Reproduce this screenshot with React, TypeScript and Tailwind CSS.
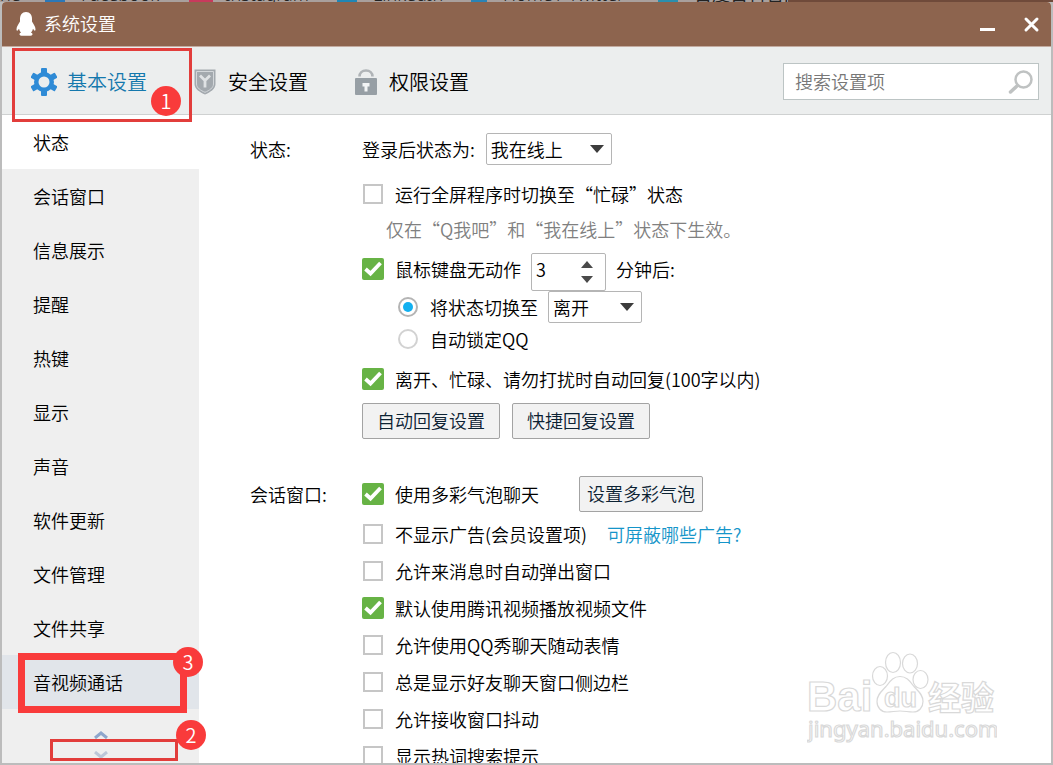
import React, { useState } from 'react';

const sidebarItems = [
  '状态',
  '会话窗口',
  '信息展示',
  '提醒',
  '热键',
  '显示',
  '声音',
  '软件更新',
  '文件管理',
  '文件共享',
  '音视频通话',
];

const chatOptions = [
  { label: '允许来消息时自动弹出窗口', checked: false },
  { label: '默认使用腾讯视频播放视频文件', checked: true },
  { label: '允许使用QQ秀聊天随动表情', checked: false },
  { label: '总是显示好友聊天窗口侧边栏', checked: false },
  { label: '允许接收窗口抖动', checked: false },
  { label: '显示热词搜索提示', checked: false },
];

const PenguinIcon = () => (
  <svg className="w-5 h-6" viewBox="0 0 20 24" fill="#fff">
    <path d="M10 0C6 0 4 3 4 7v2.500C2.500 12 .5 14.800.5 17.200c0 1.500.7 1.900 1.400 1.100l1.100-1.600c.4 1.600 1 2.900 2 3.900-1 .5-1.500 1.200-1.500 1.700 0 1 1.400 1.500 3.300 1.500h6.400c1.900 0 3.300-.5 3.300-1.500 0-.5-.5-1.200-1.500-1.700 1-1 1.600-2.300 2-3.900l1.100 1.600c.7.8 1.400.4 1.400-1.100 0-2.400-2-5.200-3.500-7.700V7C16 3 14 0 10 0z" />
  </svg>
);

const GearIcon = () => (
  <svg className="w-[26px] h-7" viewBox="0 0 26 28">
    <g fill="#2f8bd6">
      <rect x="10" y="0" width="6" height="28" rx="1" />
      <rect x="10" y="0" width="6" height="28" rx="1" transform="rotate(60 13 14)" />
      <rect x="10" y="0" width="6" height="28" rx="1" transform="rotate(120 13 14)" />
      <circle cx="13" cy="14" r="10" />
    </g>
    <circle cx="13" cy="14" r="5.500" fill="#eceeee" />
  </svg>
);

const ShieldIcon = () => (
  <svg className="w-[22px] h-[26px]" viewBox="0 0 22 26">
    <path d="M.5.500h21V15c0 5-5.500 8.500-10.500 10.500C6 23.500.5 20 .5 15z" fill="#a3a9ae" />
    <path d="M2.500 2.500h17V15c0 3.800-4.300 6.600-8.500 8.300C6.800 21.600 2.500 18.800 2.500 15z" fill="none" stroke="#d3d7da" strokeWidth="1" />
    <path d="M6 6.500l5 5 5-5M11 11v7.500" fill="none" stroke="#dfe2e4" strokeWidth="2.800" />
  </svg>
);

const LockIcon = () => (
  <svg className="w-[22px] h-[26px]" viewBox="0 0 22 26">
    <path d="M4.500 7.500C4.500 3.800 7.200 1.500 11 1.500s6.500 2.300 6.500 6" fill="none" stroke="#b0b4b7" strokeWidth="2.600" />
    <rect x="0" y="9" width="22" height="17" rx="1" fill="#979fa5" />
    <path d="M7.500 14h7v3.500h-2v5h-3v-5h-2z" fill="#f2f4f5" />
  </svg>
);

const SearchIcon = () => (
  <svg className="w-[26px] h-6" viewBox="0 0 26 24" fill="none" stroke="#bfc2c2">
    <circle cx="15.500" cy="9.500" r="8" strokeWidth="2.500" />
    <path d="M9.500 15.500L2.500 22" strokeWidth="3.500" strokeLinecap="round" />
  </svg>
);

const tabs = [
  { label: '基本设置', icon: <GearIcon />, color: 'text-[#1478ad]' },
  { label: '安全设置', icon: <ShieldIcon />, color: 'text-black' },
  { label: '权限设置', icon: <LockIcon />, color: 'text-black' },
];

interface BadgeProps {
  children: React.ReactNode;
  className: string;
}

const Badge: React.FC<BadgeProps> = ({ children, className }) => (
  <span
    className={`absolute z-10 flex size-[30px] items-center justify-center rounded-full bg-[#f93b3b] text-xl leading-none text-white ${className}`}
  >
    {children}
  </span>
);

interface CheckProps {
  label: string;
  defaultChecked?: boolean;
}

const Check: React.FC<CheckProps> = ({ label, defaultChecked = false }) => (
  <label className="flex items-center gap-[11px]">
    <span className="relative grid size-[22px] place-items-center">
      <input
        type="checkbox"
        defaultChecked={defaultChecked}
        className="peer size-5 appearance-none border-2 border-[#c6c6c6] bg-white checked:size-[22px] checked:rounded-xs checked:border-0 checked:bg-[#67b345]"
      />
      <svg className="pointer-events-none absolute inset-0 hidden peer-checked:block" viewBox="0 0 22 22">
        <path d="M3.500 11l5 4.500 10-10.500" fill="none" stroke="#fff" strokeWidth="3.800" />
      </svg>
    </span>
    {label}
  </label>
);

interface RadioProps {
  label: string;
  defaultChecked?: boolean;
}

const Radio: React.FC<RadioProps> = ({ label, defaultChecked = false }) => (
  <label className="flex items-center gap-3">
    <span className="relative grid size-5 place-items-center">
      <input
        type="radio"
        name="idle-action"
        defaultChecked={defaultChecked}
        className="peer size-5 appearance-none rounded-full border-2 border-[#d2d2d2] bg-white checked:border-[#b4b4b4]"
      />
      <span className="pointer-events-none absolute hidden size-2.5 rounded-full bg-[#12b0f0] peer-checked:block" />
    </span>
    {label}
  </label>
);

interface DropdownProps {
  id: string;
  options: string[];
  width: string;
  label?: string;
}

const Dropdown: React.FC<DropdownProps> = ({ id, options, width, label }) => (
  <span className={`relative block ${width}`}>
    <select
      id={id}
      aria-label={label}
      className="block h-8 w-full appearance-none rounded-xs border border-[#b5b5b5] bg-white pl-1"
    >
      {options.map((option) => (
        <option key={option}>{option}</option>
      ))}
    </select>
    <svg className="pointer-events-none absolute top-3 right-2 h-2 w-3.5" viewBox="0 0 14 8">
      <path d="M0 0h14L7 8z" fill="#3c3c3c" />
    </svg>
  </span>
);

interface PushButtonProps {
  children: React.ReactNode;
  width: string;
}

const PushButton: React.FC<PushButtonProps> = ({ children, width }) => (
  <button
    type="button"
    className={`flex h-9 items-center justify-center rounded-xs border border-[#a3a3a3] bg-[#f2f2f2] pb-0.5 text-[#0c2233] ${width}`}
  >
    {children}
  </button>
);

// Lower edge of the browser bookmarks that shows above the window
const BookmarkStrip = () => (
  <div className="flex h-0.5 shrink-0 items-end overflow-hidden bg-[#a9a09d] font-['Noto_Sans'] text-lg leading-4 whitespace-nowrap text-[#222]">
    <span className="w-[45px]">ne</span>
    <span className="mr-4 h-1 w-5 shrink-0 bg-[#2b78b8]" />
    <span className="w-[108px]">Facebook</span>
    <span className="mr-3 h-1 w-6 shrink-0 bg-[#c83a5c]" />
    <span className="w-[112px]">Instagram</span>
    <span className="mr-4 h-1 w-5 shrink-0 bg-[#1f86b5]" />
    <span className="w-[98px]">LinkedIn</span>
    <span className="mr-4 h-1 w-4 shrink-0 bg-[#2a83b5]" />
    <span className="w-[155px]">Home / Twitter</span>
    <span className="mr-4 h-1 w-5 shrink-0 bg-[#2a8fae]" />
    <span className="w-[94px] shrink-0 overflow-hidden">百度百科官网</span>
    <span className="h-1 flex-1 bg-[#6f4a3a]" />
  </div>
);

const Watermark = () => (
  <svg
    className="pointer-events-none absolute right-[54px] bottom-4 h-24 w-[190px]"
    viewBox="0 0 190 96"
    fill="#fff"
    stroke="#d9d9d9"
    strokeWidth="1.200"
  >
    <text x="0" y="60" fontSize="42" fontWeight="700" fontFamily="Liberation Sans, sans-serif">
      Bai
    </text>
    <ellipse cx="73" cy="25" rx="7.500" ry="9.500" />
    <ellipse cx="86" cy="11.500" rx="7.500" ry="10" />
    <ellipse cx="103" cy="12.500" rx="7.500" ry="9.500" />
    <ellipse cx="113.500" cy="28.500" rx="7.500" ry="9" />
    <path d="M93 25.500c-7 0-10 5-14 10-4 4.500-9 8-9 15 0 6 4 10.500 10 10.500 5 0 8-1 13-1s8 1 13 1c6 0 10-4.500 10-10.500 0-7-5-10.500-9-15-4-5-7-10-14-10z" />
    <text x="77" y="56" fontSize="27" fontWeight="700" fontFamily="Liberation Sans, sans-serif">
      du
    </text>
    <text x="121" y="59" fontSize="33" fontWeight="700" fontFamily="Noto Sans CJK SC, sans-serif">
      经验
    </text>
    <text x="1" y="86" fontSize="22" fontWeight="400" fontFamily="Noto Sans, sans-serif">
      jingyan.baidu.com
    </text>
  </svg>
);

const TitleBar = () => (
  <header className="flex h-[45px] shrink-0 items-center border-b border-[#c3aba0] bg-[#8d644e] pr-2.5 pl-3.5 text-white">
    <PenguinIcon />
    <h1 className="ml-2 flex-1 pb-0.5">系统设置</h1>
    <button type="button" aria-label="最小化" className="mr-6 flex size-5 items-center justify-center">
      <svg className="size-5" viewBox="0 0 20 20">
        <path d="M3 15.500h15" stroke="#fff" strokeWidth="3" />
      </svg>
    </button>
    <button type="button" aria-label="关闭" className="flex size-5 items-center justify-center">
      <svg className="size-5" viewBox="0 0 20 20">
        <path d="M5 5l11 11M16 5L5 16" stroke="#fff" strokeWidth="3" strokeLinecap="round" />
      </svg>
    </button>
  </header>
);

const Toolbar = () => (
  <div className="flex h-[68px] shrink-0 items-center justify-between border-b border-[#cfd1d1] bg-[#eceeee] pt-0.5 pr-3 pl-[29px]">
    <nav className="relative flex gap-[45px] text-xl">
      {tabs.map((tab) => (
        <button key={tab.label} type="button" className={`flex items-center gap-2.5 ${tab.color}`}>
          <span className="flex w-[26px] justify-center">{tab.icon}</span>
          {tab.label}
        </button>
      ))}
      <span className="pointer-events-none absolute -top-5 -left-[19px] z-10 h-[74px] w-[180px] border-3 border-[#e23d3b]" />
      <Badge className="top-[18px] left-[120px]">1</Badge>
    </nav>
    <label className="flex h-[37px] w-64 items-center border border-[#bcc4c4] bg-white pr-1 pl-[11px]">
      <input
        type="text"
        aria-label="搜索"
        placeholder="搜索设置项"
        className="min-w-0 flex-1 pb-0.5 outline-none placeholder:text-[#777]"
      />
      <SearchIcon />
    </label>
  </div>
);

const Sidebar = () => {
  const [active, setActive] = useState('状态');

  return (
    <aside className="relative flex w-[197px] shrink-0 flex-col bg-[#efefef]">
      {sidebarItems.map((item) => (
        <button
          key={item}
          type="button"
          onClick={() => setActive(item)}
          className={`relative h-[54px] shrink-0 pl-[31px] text-left ${
            item === active ? 'bg-white' : item === '音视频通话' ? 'bg-[#e1e5ea]' : ''
          }`}
        >
          {item}
          {item === '音视频通话' && (
            <>
              <span className="pointer-events-none absolute -top-0.5 left-4 h-[60px] w-[169px] border-7 border-[#f93b3b]" />
              <Badge className="-top-2 left-[171px]">3</Badge>
            </>
          )}
        </button>
      ))}
      <div className="relative flex flex-1 flex-col items-center gap-3 pt-[22px]">
        <svg className="h-2 w-4 shrink-0" viewBox="0 0 16 8">
          <path d="M2 7l6-5 6 5" fill="none" stroke="#8ea6cc" strokeWidth="3" />
        </svg>
        <svg className="h-2 w-4 shrink-0" viewBox="0 0 16 8">
          <path d="M2 1l6 5 6-5" fill="none" stroke="#bcc7d8" strokeWidth="3" />
        </svg>
        <span className="pointer-events-none absolute top-[30px] left-12 h-[22px] w-32 border-3 border-[#e23d3b]" />
        <Badge className="top-[11px] left-[174px]">2</Badge>
      </div>
    </aside>
  );
};

const StatusSection = () => {
  const [minutes, setMinutes] = useState(3);

  return (
    <section className="flex">
      <h2 className="w-28 shrink-0 leading-9">状态:</h2>
      <div>
        <div className="flex h-9 items-center gap-[11px]">
          <label htmlFor="login-status">登录后状态为:</label>
          <Dropdown id="login-status" options={['我在线上', '隐身', '忙碌']} width="w-[126px]" />
        </div>
        <div className="mt-2 flex h-[38px] items-center">
          <Check label="运行全屏程序时切换至“忙碌”状态" />
        </div>
        <p className="pl-6 leading-8 text-[#808080]">仅在“Q我吧”和“我在线上”状态下生效。</p>
        <div className="mt-2 flex h-[38px] items-start gap-2.5 leading-8">
          <Check label="鼠标键盘无动作" defaultChecked />
          <div className="flex h-[38px] w-[75px] items-center rounded-xs border border-[#b5b5b5] pr-3 pl-1">
            <input
              id="idle-minutes"
              type="text"
              value={minutes}
              onChange={(e) => setMinutes(Number(e.target.value) || 0)}
              className="h-8 w-0 flex-1 pb-1.5 outline-none"
            />
            <span className="flex flex-col gap-2">
              <button type="button" aria-label="增加" onClick={() => setMinutes(minutes + 1)}>
                <svg className="h-[7px] w-3" viewBox="0 0 12 7">
                  <path d="M0 7h12L6 0z" fill="#4a4a4a" />
                </svg>
              </button>
              <button type="button" aria-label="减少" onClick={() => setMinutes(minutes - 1)}>
                <svg className="h-[7px] w-3" viewBox="0 0 12 7">
                  <path d="M0 0h12L6 7z" fill="#4a4a4a" />
                </svg>
              </button>
            </span>
          </div>
          <label htmlFor="idle-minutes">分钟后:</label>
        </div>
        <div className="flex h-8 items-center gap-2.5 pl-9">
          <Radio label="将状态切换至" defaultChecked />
          <Dropdown id="idle-status" label="离开后状态" options={['离开', '隐身']} width="w-[94px]" />
        </div>
        <div className="flex h-8 items-center pl-9">
          <Radio label="自动锁定QQ" />
        </div>
        <div className="mt-2 flex h-8 items-center">
          <Check label="离开、忙碌、请勿打扰时自动回复(100字以内)" defaultChecked />
        </div>
        <div className="mt-2 flex gap-3">
          <PushButton width="w-[138px]">自动回复设置</PushButton>
          <PushButton width="w-[138px]">快捷回复设置</PushButton>
        </div>
      </div>
    </section>
  );
};

const ChatSection = () => (
  <section className="mt-[37px] flex">
    <h2 className="w-28 shrink-0 leading-9">会话窗口:</h2>
    <div>
      <div className="flex h-9 items-center gap-10">
        <Check label="使用多彩气泡聊天" defaultChecked />
        <PushButton width="w-[124px]">设置多彩气泡</PushButton>
      </div>
      <div className="mt-[3px] flex h-[37px] items-center gap-5">
        <Check label="不显示广告(会员设置项)" />
        <a href="#ads" className="text-[#1595c9]">
          可屏蔽哪些广告?
        </a>
      </div>
      {chatOptions.map((option) => (
        <div key={option.label} className="flex h-[37px] items-center">
          <Check label={option.label} defaultChecked={option.checked} />
        </div>
      ))}
    </div>
  </section>
);

const App: React.FC = () => {
  return (
    <div
      lang="zh-CN"
      className="flex h-screen flex-col overflow-hidden bg-[#bcbcbc] font-['Noto_Sans_CJK_SC',sans-serif] text-lg font-[350] text-black"
    >
      <BookmarkStrip />
      <div className="mx-0.5 mb-0.5 flex min-h-0 flex-1 flex-col overflow-hidden rounded-t-sm bg-white">
        <TitleBar />
        <Toolbar />
        <div className="relative flex min-h-0 flex-1">
          <Sidebar />
          <main className="min-w-0 flex-1 overflow-hidden pt-4 pl-[51px]">
            <StatusSection />
            <ChatSection />
          </main>
          <Watermark />
        </div>
      </div>
    </div>
  );
};

export default App;
